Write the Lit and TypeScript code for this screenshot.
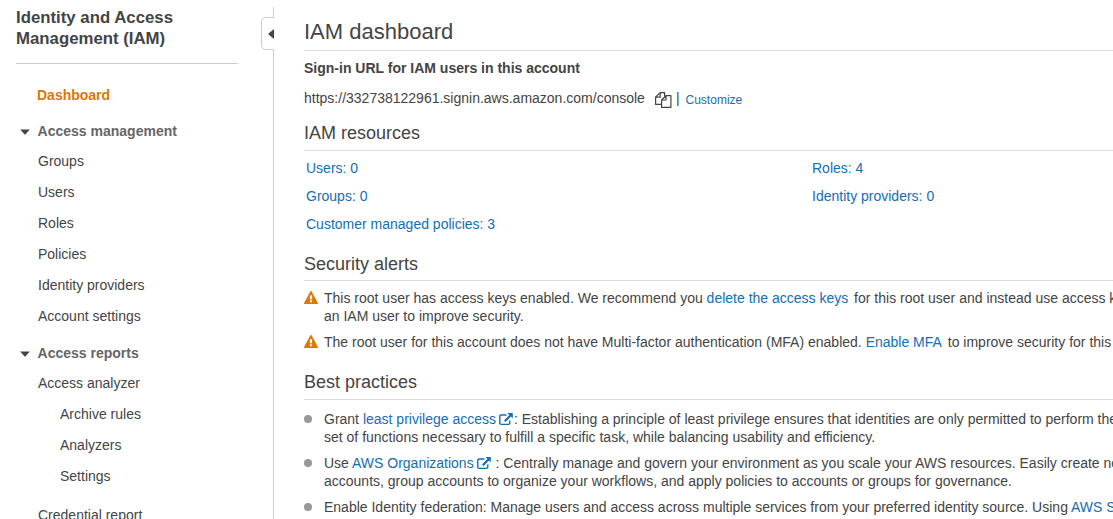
import { LitElement, html, css } from "lit";
import { customElement } from "lit/decorators.js";

const external = html`<svg class="ext" width="14" height="13" viewBox="0 0 14 13">
  <path d="M7.500 2H2.200Q.8 2 .8 3.400v6.600Q.8 11.400 2.200 11.400h7.200q1.400 0 1.400-1.400V7.500" fill="none" stroke="currentColor" stroke-width="1.400"/>
  <path d="M8.400 0H13.800v5.400l-1.800-1.800-5.400 5.400-1.600-1.600 5.400-5.400z" fill="currentColor"/>
</svg>`;

const warning = html`<svg class="warn" width="14" height="13" viewBox="0 0 14 13">
  <path d="M6.300.6Q7-.4 7.700.6L13.800 11.800q.4 1.200-.6 1.200H.8q-1 0-.6-1.200z" fill="#e07700"/>
  <path d="M5.900 4.200h2.200v4H5.900zM5.900 9.300h2.200v1.900H5.900z" fill="#fff"/>
</svg>`;

const copy = html`<svg class="copy" width="17" height="16" viewBox="0 0 17 16">
  <g fill="none" stroke="#444" stroke-width="1.200" stroke-linejoin="round">
    <path d="M6.300 12.400H.6V5.200L5.200.6h4.400v3.800M5.200.6v4.600H.6"/>
    <path d="M11 3.600h4.900v11.800H6.600V8zM11 3.600V8H6.600"/>
  </g>
</svg>`;

@customElement("iam-sidebar")
class IamSidebar extends LitElement {
  static styles = css`
    :host { display: flex; width: 274px; height: 519px; flex: none; overflow: hidden; color: #444; }
    .nav { width: 222px; padding: 7px 23px 0 16px; flex: none; }
    .title { font-size: 16.8px; font-weight: bold; line-height: 21px; height: 56px; border-bottom: 1px solid #ccc; }
    .item { padding-left: 22px; line-height: 31px; height: 31px; }
    .active { color: #e07700; font-weight: bold; padding-left: 21px; margin-top: 16px; height: 36px; }
    .group { display: flex; align-items: center; height: 30px; line-height: 30px; font-weight: bold; color: #666; gap: 7.600px; padding-left: 4px; }
    .group svg { margin-top: 2px; }
    .reports { margin-top: 6px; }
    .sub { padding-left: 44px; }
    .last { margin-top: 8px; }
    .edge { width: 13px; display: flex; flex-direction: column; margin-top: 7px; }
    .top { height: 10px; border-right: 1px solid #ccc; flex: none; }
    .tab { box-sizing: border-box; height: 33px; border: 1px solid #ccc; border-right: 0; border-radius: 5px 0 0 5px; display: flex; align-items: center; justify-content: flex-end; flex: none; }
    .rest { flex: 1; border-right: 1px solid #ccc; }
  `;
  group(label: string, cls = "") {
    return html`<div class="group ${cls}">
      <svg width="10" height="6" viewBox="0 0 10 6"><path d="M.2.500h9.600L5.600 5.300q-.6.500-1.200 0z" fill="#444"/></svg>${label}</div>`;
  }
  render() {
    return html`
      <div class="nav">
        <div class="title">Identity and Access<br />Management (IAM)</div>
        <div class="item active">Dashboard</div>
        ${this.group("Access management")}
        ${["Groups", "Users", "Roles", "Policies", "Identity providers", "Account settings"].map((t) => html`<div class="item">${t}</div>`)}
        ${this.group("Access reports", "reports")}
        <div class="item">Access analyzer</div>
        ${["Archive rules", "Analyzers", "Settings"].map((t) => html`<div class="item sub">${t}</div>`)}
        <div class="item last">Credential report</div>
      </div>
      <div class="edge">
        <div class="top"></div>
        <div class="tab"><svg width="6" height="10" viewBox="0 0 6 10"><path d="M6 0v10L.6 5.600q-.5-.6 0-1.200z" fill="#444"/></svg></div>
        <div class="rest"></div>
      </div>`;
  }
}

@customElement("app-root")
class AppRoot extends LitElement {
  static styles = css`
    :host { display: flex; width: 1113px; height: 519px; overflow: hidden; background: #fff; color: #444; font: 14px/18px "Liberation Sans", Arial, sans-serif; }
    .main { flex: 1; min-width: 0; padding-left: 30px; overflow: hidden; white-space: nowrap; }
    h1, h2 { margin: 0; font-weight: normal; border-bottom: 1px solid #ddd; box-sizing: border-box; }
    h1 { font-size: 22px; line-height: 26px; height: 51px; padding-top: 19px; }
    h2 { font-size: 18px; line-height: 22px; }
    .sign { font-weight: bold; margin-top: 8px; }
    .url { display: flex; height: 18px; margin-top: 12px; }
    .copy { margin: 3px 0 0 10px; }
    .bar { margin-left: 4px; }
    .custom { font-size: 12px; margin: 2px 0 0 6px; }
    a { color: #146eb4; text-decoration: none; }
    .res { height: 29px; margin-top: 15px; }
    .grid { display: grid; grid-template-columns: 506px auto; grid-auto-rows: 28px; line-height: 28px; padding: 3px 0 0 2px; }
    .sec { height: 28px; margin-top: 15px; }
    .best { height: 29px; margin-top: 20px; }
    .row { display: flex; margin-top: 8px; }
    .mark { width: 20px; flex: none; display: flex; align-items: flex-start; }
    .warn { margin-top: 2px; }
    .dot { width: 8px; height: 8px; border-radius: 50%; background: #999; margin-top: 5px; }
    .first { margin-top: 10px; }
    .gap { margin-right: 2px; }
    .ext { vertical-align: -2px; margin: 0 1px 0 3px; }
  `;
  render() {
    return html`
      <iam-sidebar></iam-sidebar>
      <div class="main">
        <h1>IAM dashboard</h1>
        <div class="sign">Sign-in URL for IAM users in this account</div>
        <div class="url"><span>https://332738122961.signin.aws.amazon.com/console</span>${copy}<span class="bar">|</span><a class="custom">Customize</a></div>
        <h2 class="res">IAM resources</h2>
        <div class="grid">
          <a>Users: 0</a><a>Roles: 4</a><a>Groups: 0</a><a>Identity providers: 0</a><a>Customer managed policies: 3</a>
        </div>
        <h2 class="sec">Security alerts</h2>
        <div class="row"><span class="mark">${warning}</span><div>This root user has access keys enabled. We recommend you <a class="gap">delete the access keys</a> for this root user and instead use access keys for<br />an IAM user to improve security.</div></div>
        <div class="row"><span class="mark">${warning}</span><div>The root user for this account does not have Multi-factor authentication (MFA) enabled. <a class="gap">Enable MFA</a> to improve security for this account.</div></div>
        <h2 class="best">Best practices</h2>
        <div class="row first"><span class="mark"><i class="dot"></i></span><div>Grant <a>least privilege access${external}</a>: Establishing a principle of least privilege ensures that identities are only permitted to perform the smallest<br />set of functions necessary to fulfill a specific task, while balancing usability and efficiency.</div></div>
        <div class="row"><span class="mark"><i class="dot"></i></span><div>Use <a>AWS Organizations${external}</a> : Centrally manage and govern your environment as you scale your AWS resources. Easily create new<br />accounts, group accounts to organize your workflows, and apply policies to accounts or groups for governance.</div></div>
        <div class="row"><span class="mark"><i class="dot"></i></span><div>Enable Identity federation: Manage users and access across multiple services from your preferred identity source. Using <a>AWS Single Sign-On</a></div></div>
      </div>`;
  }
}
